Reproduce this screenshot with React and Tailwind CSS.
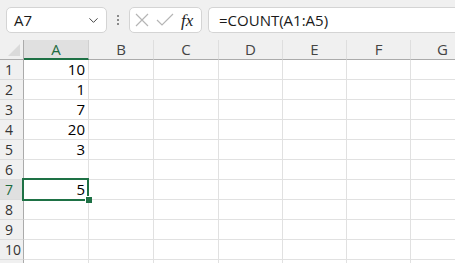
import { ChevronDown } from "lucide-react";

const cols = ["A", "B", "C", "D", "E", "F", "G"];
const widths = ["w-[65px]", "w-[65px]", "w-[65px]", "w-[64px]", "w-[64px]", "w-[64px]", "w-[64px]"];
const values = { 1: "10", 2: "1", 3: "7", 4: "20", 5: "3", 7: "5" };
const rows = [1, 2, 3, 4, 5, 6, 7, 8, 9, 10, 11];

function FormulaBar() {
  return (
    <div className="flex items-center h-[40px] bg-[#f0f0f0] pl-[6px] gap-0">
      <div className="flex items-center justify-between w-[101px] h-[26px] bg-white border border-[#d4d4d4] rounded-[5px] pl-[7px] pr-[5px]">
        <span className="text-[15px] text-[#1a1a1a]">A7</span>
        <ChevronDown size={15} strokeWidth={1.6} className="text-[#444]" />
      </div>
      <div className="flex flex-col items-center gap-[2px] w-[22px]">
        <span className="w-[2px] h-[2px] bg-[#8a8a8a]" />
        <span className="w-[2px] h-[2px] bg-[#8a8a8a]" />
        <span className="w-[2px] h-[2px] bg-[#8a8a8a]" />
      </div>
      <div className="flex items-center w-[73px] h-[26px] bg-white border border-[#d4d4d4] rounded-[5px] pl-[5px] gap-[7px]">
        <svg width="14" height="14" viewBox="0 0 14 14" stroke="#b5b5b5" strokeWidth="1.2" fill="none">
          <path d="M1 1L13 13M13 1L1 13" />
        </svg>
        <svg width="18" height="14" viewBox="0 0 18 14" stroke="#b5b5b5" strokeWidth="1.2" fill="none">
          <path d="M1 7L6 12L17 1" />
        </svg>
        <span className="text-[17px] italic text-[#222] leading-none" style={{ fontFamily: '"Liberation Serif", serif' }}>
          fx
        </span>
      </div>
      <div className="flex items-center flex-1 h-[26px] ml-[6px] bg-white border border-r-0 border-[#d4d4d4] rounded-l-[5px] pl-[10px]">
        <span className="text-[15px] text-[#1a1a1a]">=COUNT(A1:A5)</span>
      </div>
    </div>
  );
}

function HeaderRow() {
  return (
    <div className="flex h-[20px]">
      <div className="w-[24px] shrink-0 bg-[#f0f0f0] border-r border-b border-[#ababab] flex items-end justify-end pr-[3px] pb-[3px]">
        <svg width="12" height="12" viewBox="0 0 12 12">
          <path d="M12 0V12H0Z" fill="#dadada" />
        </svg>
      </div>
      {cols.map((c, i) => (
        <div
          key={c}
          className={`${widths[i]} shrink-0 flex items-center justify-center text-[15px] ${
            c === "A"
              ? "bg-[#e0e0e0] border-b-2 border-[#1e7145] text-[#1e6b41] border-r border-r-[#d0d0d0]"
              : "bg-[#f0f0f0] border-b border-[#ababab] text-[#444] border-r border-r-[#dedede]"
          }`}
        >
          {c}
        </div>
      ))}
    </div>
  );
}

export default function App() {
  return (
    <div className="w-[455px] h-[263px] overflow-hidden bg-white" style={{ fontFamily: '"Open Sans", "Liberation Sans", sans-serif' }}>
      <FormulaBar />
      <HeaderRow />
      {rows.map((r) => (
        <div key={r} className="flex h-[20px]">
          <div
            className={`w-[24px] shrink-0 flex items-center pl-[5px] text-[14px] border-r border-r-[#ababab] border-b border-b-[#dcdcdc] ${
              r === 7 ? "bg-[#e0e0e0] text-[#1e6b41]" : "bg-[#f0f0f0] text-[#333]"
            }`}
          >
            {r < 11 ? r : ""}
          </div>
          {cols.map((c, i) => (
            <div
              key={c}
              className={`${widths[i]} shrink-0 relative border-r border-b border-[#e1e1e1] flex items-center justify-end pr-[3px] text-[15px] text-black`}
            >
              {c === "A" && values[r]}
              {c === "A" && r === 7 && (
                <>
                  <div className="absolute z-10 left-[-2px] top-[-2px] w-[67px] h-[23px] border-2 border-[#1e7145]" />
                  <div className="absolute z-20 left-[61px] top-[16px] w-[7px] h-[7px] bg-[#1e7145] border-t border-l border-white" />
                </>
              )}
            </div>
          ))}
        </div>
      ))}
    </div>
  );
}
